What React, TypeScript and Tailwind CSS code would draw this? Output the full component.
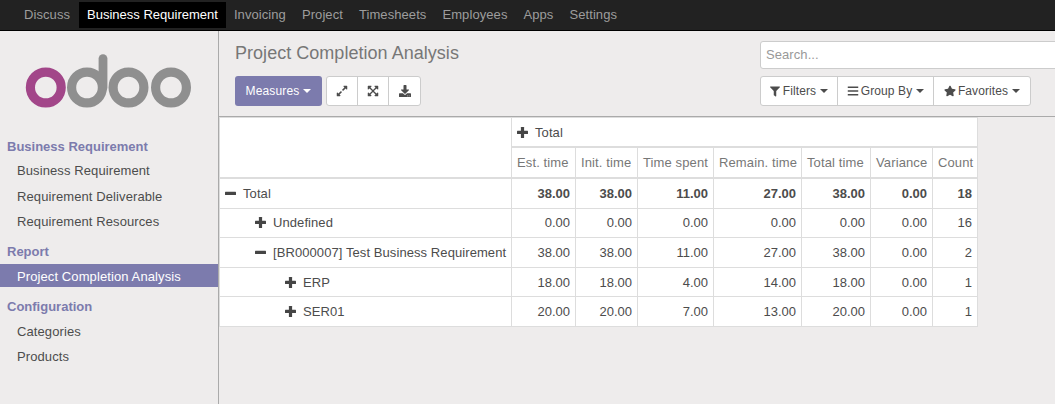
import React from "react";
import { FaFilter, FaBars, FaStar, FaExpandAlt, FaDownload, FaExpandArrowsAlt } from "react-icons/fa";

const nav = ["Discuss", "Business Requirement", "Invoicing", "Project", "Timesheets", "Employees", "Apps", "Settings"];

function Caret() {
  return <span className="inline-block ml-[4px] align-middle w-0 h-0 border-x-[4px] border-t-[4px] border-x-transparent border-t-current" />;
}

function Logo() {
  return (
    <svg width="168" height="56" viewBox="0 0 168 56" className="block">
      <g fill="none" strokeWidth="9.2">
        <circle cx="20.8" cy="33.5" r="15.4" stroke="#a24689" />
        <circle cx="62" cy="33.5" r="15.4" stroke="#8f8f8f" />
        <path d="M78 33.5V4.6" stroke="#8f8f8f" strokeWidth="8.8" strokeLinecap="round" />
        <circle cx="103.5" cy="33.5" r="15.4" stroke="#8f8f8f" />
        <circle cx="146" cy="33.5" r="15.4" stroke="#8f8f8f" />
      </g>
    </svg>
  );
}

function SideHeader({ children, className = "" }: { children: React.ReactNode; className?: string }) {
  return <div className={`pl-[7px] font-bold text-[#7c7bad] leading-[18.57px] ${className}`}>{children}</div>;
}
function SideItem({ children, active = false, className = "mt-[3px]" }: { children: React.ReactNode; active?: boolean; className?: string }) {
  return (
    <div className={`pl-[17px] leading-[18.57px] tracking-[0.1px] ${active ? "bg-[#7c7bad] text-white pt-[4px] pb-[0.4px]" : "text-[#4c4c4c] py-[2px]"} ${className}`}>
      {children}
    </div>
  );
}

const measures = ["Est. time", "Init. time", "Time spent", "Remain. time", "Total time", "Variance", "Count"];
type Row = { label: string; indent: string; open: boolean; vals: string[]; bold?: boolean; pad: string };
const rows: Row[] = [
  { label: "Total", indent: "pl-[5px]", pad: "pt-[6.2px] pb-[4.6px]", open: true, bold: true, vals: ["38.00", "38.00", "11.00", "27.00", "38.00", "0.00", "18"] },
  { label: "Undefined", indent: "pl-[35px]", pad: "pt-[5px] pb-[4.7px]", open: false, vals: ["0.00", "0.00", "0.00", "0.00", "0.00", "0.00", "16"] },
  { label: "[BR000007] Test Business Requirement", indent: "pl-[35px]", pad: "pt-[5.3px] pb-[5px]", open: true, vals: ["38.00", "38.00", "11.00", "27.00", "38.00", "0.00", "2"] },
  { label: "ERP", indent: "pl-[65px]", pad: "pt-[5.6px] pb-[4.1px]", open: false, vals: ["18.00", "18.00", "4.00", "14.00", "18.00", "0.00", "1"] },
  { label: "SER01", indent: "pl-[65px]", pad: "pt-[5.3px] pb-[5px]", open: false, vals: ["20.00", "20.00", "7.00", "13.00", "20.00", "0.00", "1"] },
];

function Toggle({ open }: { open: boolean }) {
  return (
    <svg width="11" height="11" viewBox="0 0 11 11" className="inline-block mr-[7px] align-[-1px]" fill="#454545">
      <rect x="0" y="3.7" width="11" height="3.2" rx="0.5" />
      {!open && <rect x="3.9" y="0" width="3.2" height="11" rx="0.5" />}
    </svg>
  );
}

export default function App() {
  return (
    <div className="h-[404px] w-[1055px] overflow-hidden flex flex-col bg-[#eeecec] text-[13px] text-[#4c4c4c] font-['Liberation_Sans',Arial,sans-serif] leading-[18.57px]">
      <nav className="h-[31px] shrink-0 bg-[#222222] border-b border-black flex items-stretch pl-4 pt-[2px] pb-[2px] tracking-[0.08px]">
        {nav.map((n) => (
          <a
            key={n}
            className={`flex items-center ${n === "Discuss" ? "pl-2 pr-[9px]" : "px-2"} ${n === "Business Requirement" ? "bg-black text-white tracking-normal" : "text-[#9d9d9d]"}`}
          >
            {n}
          </a>
        ))}
      </nav>
      <div className="flex flex-1 min-h-0">
        <aside className="w-[219px] shrink-0 border-r border-[#aaaaaa] bg-[#eeecec]">
          <div className="pt-[23px] pl-[25px] h-[107px]">
            <Logo />
          </div>
          <SideHeader>Business Requirement</SideHeader>
          <SideItem>Business Requirement</SideItem>
          <SideItem className="mt-[4px]">Requirement Deliverable</SideItem>
          <SideItem className="mt-[2.5px]">Requirement Resources</SideItem>
          <SideHeader className="mt-[9.5px]">Report</SideHeader>
          <SideItem active className="mt-[2.15px]">Project Completion Analysis</SideItem>
          <SideHeader className="mt-[10.7px]">Configuration</SideHeader>
          <SideItem className="mt-[4.4px]">Categories</SideItem>
          <SideItem className="mt-[2.4px]">Products</SideItem>
        </aside>
        <main className="flex-1 min-w-0 flex flex-col">
          <div className="h-[86px] shrink-0 border-b border-[#aaaaaa] flex pl-4">
            <div className="flex-1 min-w-0">
              <h1 className="text-[18px] leading-[20px] mt-[12px] text-[#777777] tracking-[0.03px]">Project Completion Analysis</h1>
              <div className="flex mt-[13px] gap-1">
                <button className="h-[30px] w-[87px] rounded-[3px] bg-[#7c7bad] text-white text-[12px] tracking-[0.15px] flex items-center justify-center">
                  Measures<Caret />
                </button>
                <div className="flex h-[30px] bg-white border border-[#cccccc] rounded-[3px] divide-x divide-[#cccccc] text-[#4c4c4c]">
                  <span className="w-[31px] flex items-center justify-center"><FaExpandAlt className="w-[12px] h-[12px]" /></span>
                  <span className="w-[31px] flex items-center justify-center"><FaExpandArrowsAlt className="w-[12px] h-[12px]" /></span>
                  <span className="w-[31px] flex items-center justify-center"><FaDownload className="w-[12px] h-[12px]" /></span>
                </div>
              </div>
            </div>
            <div className="w-[320px] shrink-0 -mr-[25px]">
              <div className="mt-[10px] h-[28px] bg-white border border-[#cccccc] rounded-[3px] pl-[5px] flex items-center text-[#999999] tracking-[0.08px]">Search...</div>
              <div className="mt-[7px] flex h-[30px] w-[271px] bg-white border border-[#cccccc] rounded-[3px] divide-x divide-[#cccccc] text-[#4c4c4c] text-[12px] tracking-[0.1px]">
                <span className="w-[77px] flex items-center justify-center"><FaFilter className="w-[10px] h-[11px] mr-[3px]" />Filters<Caret /></span>
                <span className="w-[96px] flex items-center justify-center"><FaBars className="w-[12px] h-[12px] mr-[2px]" />Group By<Caret /></span>
                <span className="flex-1 flex items-center justify-center"><FaStar className="w-[12px] h-[12px] mr-[2px]" />Favorites<Caret /></span>
              </div>
            </div>
          </div>
          <div className="pt-[0.4px]">
            <table className="table-fixed w-[759px] bg-white border-collapse whitespace-nowrap">
              <colgroup>
                <col className="w-[292px]" />
                <col className="w-[64px]" />
                <col className="w-[62px]" />
                <col className="w-[76px]" />
                <col className="w-[88px]" />
                <col className="w-[69px]" />
                <col className="w-[62px]" />
                <col className="w-[45px]" />
              </colgroup>
              <thead>
                <tr>
                  <th rowSpan={2} className="border border-[#dddddd] border-b-2 p-[5px] font-normal" />
                  <th colSpan={7} className="border border-[#dddddd] border-b-2 pt-[5.6px] pb-[3.9px] px-[5px] font-normal text-left text-[#4c4c4c] tracking-[0.08px]">
                    <Toggle open={false} />Total
                  </th>
                </tr>
                <tr>
                  {measures.map((m) => (
                    <th key={m} className="border border-[#dddddd] border-b-2 pt-[5.5px] pb-[4.2px] px-[5px] font-normal text-left text-[#777777] tracking-[0.12px]">{m}</th>
                  ))}
                </tr>
              </thead>
              <tbody>
                {rows.map((r) => (
                  <tr key={r.label}>
                    <td className={`border border-[#dddddd] pr-[5px] tracking-[0.08px] ${r.pad} ${r.indent}`}>
                      <Toggle open={r.open} />{r.label}
                    </td>
                    {r.vals.map((v, i) => (
                      <td key={i} className={`border border-[#dddddd] px-[5px] text-right ${r.pad} ${r.bold ? "font-bold" : ""}`}>{v}</td>
                    ))}
                  </tr>
                ))}
              </tbody>
            </table>
          </div>
        </main>
      </div>
    </div>
  );
}
